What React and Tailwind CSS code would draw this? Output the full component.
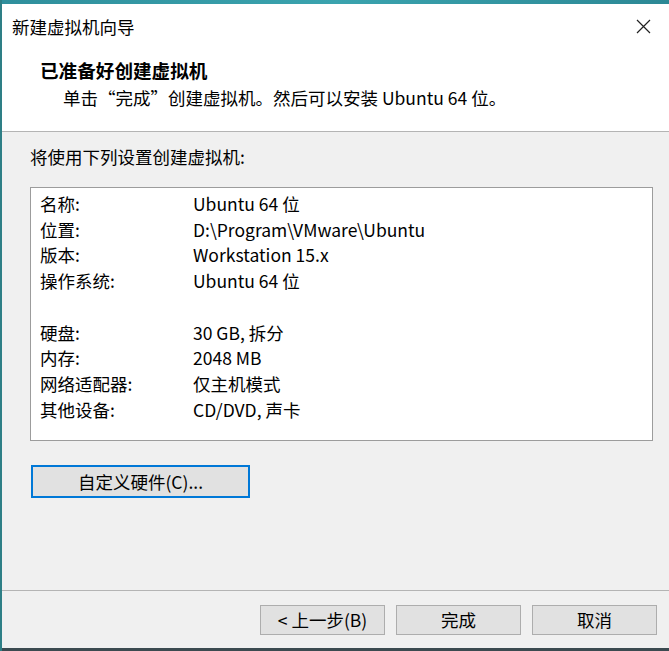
import React from "react";

const font = { fontFamily: '"Noto Sans CJK SC", "Noto Sans", sans-serif' };

const rows = [
  ["名称:", "Ubuntu 64 位"],
  ["位置:", "D:\\Program\\VMware\\Ubuntu"],
  ["版本:", "Workstation 15.x"],
  ["操作系统:", "Ubuntu 64 位"],
  null,
  ["硬盘:", "30 GB, 拆分"],
  ["内存:", "2048 MB"],
  ["网络适配器:", "仅主机模式"],
  ["其他设备:", "CD/DVD, 声卡"],
];

const App = () => {
  return (
    <div
      className="w-[669px] h-[651px] flex flex-col bg-[#f0f0f0] text-black border-l-2 border-[#2e7f86] overflow-hidden"
      style={font}
    >
      {/* window top edge */}
      <div className="h-[4px] bg-gradient-to-r from-[#2f8f9c] via-[#3aa3ae] to-[#2c8895]" />

      {/* Title bar */}
      <div className="h-[46px] bg-white flex items-center justify-between pl-[10px] pr-[18px]">
        <span className="text-[17.5px] leading-[24px]">新建虚拟机向导</span>
        <svg width="15" height="15" viewBox="0 0 15 15" className="mt-[-1px]">
          <path d="M1 1 L14 14 M14 1 L1 14" stroke="#222" strokeWidth="1.2" fill="none" />
        </svg>
      </div>

      {/* Header */}
      <div className="h-[82px] bg-white border-b border-[#b4b4b4] pl-[38px] pt-[8px]">
        <div className="text-[18.6px] leading-[24px] font-bold">已准备好创建虚拟机</div>
        <div className="text-[17.5px] leading-[24px] mt-[4px] pl-[23px]">
          单击“完成”创建虚拟机。然后可以安装 Ubuntu 64 位。
        </div>
      </div>

      {/* Content */}
      <div className="flex-1 flex flex-col px-[28px] pt-[13px]">
        <div className="text-[17.5px] leading-[24px]">将使用下列设置创建虚拟机:</div>

        <div className="mt-[18px] w-[623px] h-[254px] bg-white border border-[#9c9c9c] pl-[9px] pt-[3px]">
          {rows.map((r, i) =>
            r ? (
              <div key={i} className="flex h-[25.75px] items-center text-[17.5px]">
                <span className="w-[153px]">{r[0]}</span>
                <span>{r[1]}</span>
              </div>
            ) : (
              <div key={i} className="h-[25.75px]" />
            )
          )}
        </div>

        <button className="mt-[24px] ml-[1px] w-[219px] h-[33px] bg-[#e1e1e1] border-2 border-[#0078d7] text-[17.5px] leading-[24px] flex items-center justify-center">
          自定义硬件(C)...
        </button>
      </div>

      {/* Footer */}
      <div className="h-[58px] border-t border-[#b4b4b4] flex justify-end gap-[11px] pt-[14px] pr-[12px]">
        {["< 上一步(B)", "完成", "取消"].map((t) => (
          <button
            key={t}
            className="w-[125px] h-[30px] bg-[#e1e1e1] border border-[#adadad] text-[17.5px] leading-[24px] flex items-center justify-center"
          >
            {t}
          </button>
        ))}
      </div>

      {/* window bottom edge */}
      <div className="h-[3px] bg-[#3b4a50]" />
    </div>
  );
};

export default App;
